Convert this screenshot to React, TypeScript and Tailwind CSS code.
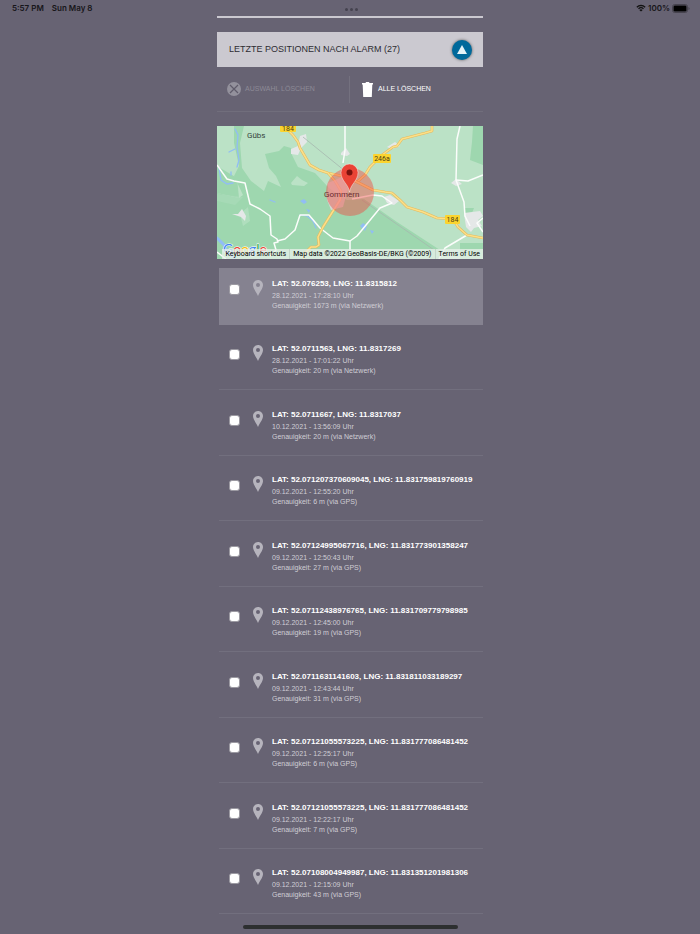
import React, { useState } from 'react';

interface Position {
  lat: string;
  lng: string;
  time: string;
  accuracy: string;
}

const POSITIONS: Position[] = [
  { lat: '52.076253', lng: '11.8315812', time: '28.12.2021 - 17:28:10 Uhr', accuracy: '1673 m (via Netzwerk)' },
  { lat: '52.0711563', lng: '11.8317269', time: '28.12.2021 - 17:01:22 Uhr', accuracy: '20 m (via Netzwerk)' },
  { lat: '52.0711667', lng: '11.8317037', time: '10.12.2021 - 13:56:09 Uhr', accuracy: '20 m (via Netzwerk)' },
  { lat: '52.071207370609045', lng: '11.831759819760919', time: '09.12.2021 - 12:55:20 Uhr', accuracy: '6 m (via GPS)' },
  { lat: '52.07124995067716', lng: '11.831773901358247', time: '09.12.2021 - 12:50:43 Uhr', accuracy: '27 m (via GPS)' },
  { lat: '52.07112438976765', lng: '11.831709779798985', time: '09.12.2021 - 12:45:00 Uhr', accuracy: '19 m (via GPS)' },
  { lat: '52.0711631141603', lng: '11.831811033189297', time: '09.12.2021 - 12:43:44 Uhr', accuracy: '31 m (via GPS)' },
  { lat: '52.07121055573225', lng: '11.831777086481452', time: '09.12.2021 - 12:25:17 Uhr', accuracy: '6 m (via GPS)' },
  { lat: '52.07121055573225', lng: '11.831777086481452', time: '09.12.2021 - 12:22:17 Uhr', accuracy: '7 m (via GPS)' },
  { lat: '52.07108004949987', lng: '11.831351201981306', time: '09.12.2021 - 12:15:09 Uhr', accuracy: '43 m (via GPS)' },
];

const MAIN_ROADS = [
  'M71 4L76 9L81 16L83 22L93 39L102 44L111 47L125 50L140 56',
  'M111 47L118 55L124 65L123 74L106 101L101 111L102 119L99 121L94 121L88 127L87 133',
  'M140 56L148 49L153 41L165 29L176 21L180 20L185 13L208 7L215 5V0',
  'M133 52L140 56L156 64L168 66L175 67L183 74L190 81L206 86L220 92L236 93L241 101L250 109L266 112',
];

const SIDE_ROADS = [
  'M0 39L10 53L17 55L28 57L33 78L43 83L53 90L54 109L60 113L61 116L57 117L59 124L53 130',
  'M60 115L68 113L78 104L83 89L92 89L103 102L116 112L133 115L140 110L163 82L175 77L165 70L156 69L135 73',
  'M128 0V24L126 37',
  'M243 0L240 13L239 54L247 76L248 90L253 100',
  'M239 54L251 55L266 49',
  'M250 109L228 122L222 133',
  'M133 133V115',
  'M266 92L260 97L266 106',
  'M0 126L9 133',
];

const PinIcon: React.FC = () => (
  <svg viewBox="0 0 10 16" className="h-4 w-[10px] shrink-0" aria-hidden="true">
    <path
      fillRule="evenodd"
      fill="#b6b4bd"
      d="M5 0C2.200 0 0 2.200 0 5c0 3.600 3.200 6.600 5 11 1.800-4.400 5-7.400 5-11 0-2.800-2.200-5-5-5zm0 3a2 2 0 1 1 0 4 2 2 0 0 1 0-4z"
    />
  </svg>
);

const StatusBar: React.FC = () => (
  <header className="grid h-4 grid-cols-3 items-center pr-[10px] pl-3 text-[8px] leading-4 font-semibold text-[#17161a]">
    <div className="flex gap-2 font-[Inter,sans-serif]">
      <span>5:57 PM</span>
      <span>Sun May 8</span>
    </div>
    <div className="flex justify-center gap-[2px] pt-[2px]">
      <span className="size-[3px] rounded-full bg-[#45424f]" />
      <span className="size-[3px] rounded-full bg-[#45424f]" />
      <span className="size-[3px] rounded-full bg-[#45424f]" />
    </div>
    <div className="flex items-center justify-end gap-[2px] font-[Inter,sans-serif]">
      <svg viewBox="0 0 18 14" className="h-[8px] w-[10px]" aria-hidden="true">
        <path d="M1.500 5.500a11 11 0 0 1 15 0M4.500 8.500a6.500 6.500 0 0 1 9 0" fill="none" stroke="#111" strokeWidth="2.400" />
        <path d="M9 13.500L6 10.500a4.300 4.300 0 0 1 6 0z" fill="#111" />
      </svg>
      <span>100%</span>
      <svg viewBox="0 0 18 9" className="h-[9px] w-[18px]" aria-hidden="true">
        <rect x="0.500" y="0.500" width="15" height="8" rx="2.200" fill="none" stroke="#47444f" />
        <rect x="1.500" y="1.500" width="13" height="6" rx="1.300" fill="#000" />
        <path d="M16.500 3v3q1-.5 1-1.500t-1-1.500z" fill="#47444f" />
      </svg>
    </div>
  </header>
);

const MapView: React.FC = () => (
  <section aria-label="Karte" className="relative mt-[14px] overflow-hidden">
    <svg viewBox="0 0 266 133" className="block w-full" fontFamily="Roboto, sans-serif">
      <rect width="266" height="133" fill="#bbe2c6" />

      {/* Forest */}
      <g fill="#9ed7af">
        <path d="M17 0H27L23 17L25 42L34 55L47 65L51 55L64 61L59 50L52 42L48 28L62 25L67 20L74 22L75 29L81 41L98 47L112 62L130 74L147 73L180 96L226 126L224 133H0V67L22 72L26 69L17 50L22 40L17 17z" />
        <path d="M0 67L22 72L20 52L0 40z" />
        <path d="M256 0H266V39L253 34L255 16zM243 117H266V133H243zM248 82h9l-2 5h-7z" />
      </g>
      <g fill="#bbe2c6">
        <path d="M74 57l6-7 5 4 6 3-4 3-12-1z" />
        <path d="M23 88l8-7 2 14-7 5z" opacity="0.600" />
        <path d="M0 68l26 3-8 8-18-4z" opacity="0.300" />
      </g>

      {/* Water */}
      <g fill="none" stroke="#91bdf5" strokeLinecap="round">
        <path d="M18 3l3 6-1 12 2 13-2 7M12 26l6-3M2 42l2 12 6 4 6-1M14 46v3" strokeWidth="1.300" />
        <path d="M0 112l7 7 4 8 6 5" strokeWidth="3" />
        <path d="M83 89l7 1 6 5 3 7" strokeWidth="1.200" />
        <path d="M53 74l5 2" strokeWidth="1.300" />
      </g>
      <path d="M83 75l4-2 3 3-3 2zM143 100l3-3 4 3-2 5zM153 104l4 1-2 3zM89 83l4 1-1 3z" fill="#91bdf5" />

      {/* Settlements */}
      <path
        d="M83 10l6-2 1 8-6 6-3 7-7-1v-5l7-3zM15 88l6 0 4-5 4 7-1 5-4-4-3-1zM124 27l5-5 4 6-3 2-6-1zM170 21l8-5 5 4-8 3zM234 57l5-4 6 5-6 2zM167 71l6-2 9 6-5 4-7-2zM247 87l16-2 3 5-5 4 4 6-8 2-3 4-5-5z"
        fill="#e5e8e8"
      />
      <path d="M86 11l42 34M145 74l75 52" stroke="#a6b8ae" strokeWidth="0.800" />

      {/* Roads */}
      {SIDE_ROADS.map((d) => (
        <path key={d} d={d} fill="none" stroke="#fbfdfb" strokeWidth="1.500" strokeLinejoin="round" />
      ))}
      {MAIN_ROADS.map((d) => (
        <g key={d} fill="none" strokeLinejoin="round">
          <path d={d} stroke="#e6b95c" strokeWidth="2.600" />
          <path d={d} stroke="#fbe089" strokeWidth="1.500" />
        </g>
      ))}

      {/* Accuracy radius, the built-up side of town shows through pinker */}
      <path d="M111 57l14-6 6 12-5 18-12 3-4-10z" fill="#f6dcea" opacity="0.600" />
      <circle cx="133" cy="66" r="24" fill="#f0443c" fillOpacity="0.430" />

      <g fontSize="7" textAnchor="middle">
        <rect x="63" y="-2" width="16" height="8" rx="1" fill="#fbd42f" />
        <text x="71" y="5" fill="#4b3e12">184</text>
        <rect x="156" y="28" width="18" height="9" rx="1" fill="#fbd42f" />
        <text x="165" y="35" fill="#4b3e12">246a</text>
        <rect x="228" y="89" width="15" height="9" rx="1" fill="#fbd42f" />
        <text x="235.500" y="96" fill="#4b3e12">184</text>
      </g>
      <text x="30" y="12" fontSize="8" fill="#35453c">Gübs</text>
      <text x="107" y="71" fontSize="8" fill="#6b2a30">Gommern</text>

      {/* Marker */}
      <path d="M132.500 66c-1-8-8.500-11-8.500-19.500a8.500 8.500 0 0 1 17 0c0 8.500-7.500 11.500-8.500 19.500z" fill="#ea4335" stroke="#fff" strokeOpacity="0.600" strokeWidth="0.700" />
      <circle cx="132.500" cy="46.500" r="3" fill="#7c130d" />

      <text x="6" y="128" fontSize="14" fontFamily="Lato, sans-serif" stroke="#fff" strokeWidth="1" paintOrder="stroke">
        <tspan fill="#4285f4">G</tspan>
        <tspan fill="#ea4335">o</tspan>
        <tspan fill="#fbbc05">o</tspan>
        <tspan fill="#4285f4">g</tspan>
        <tspan fill="#34a853">l</tspan>
        <tspan fill="#ea4335">e</tspan>
      </text>
    </svg>
    <div className="absolute right-0 bottom-0 flex h-[10px] font-[Roboto,sans-serif] text-[7px] leading-[10px] whitespace-nowrap text-black">
      <button type="button" className="bg-[#e9f1eb]/75 px-[3px]">Keyboard shortcuts</button>
      <span className="border-l border-[#c2d5c8] bg-[#e9f1eb]/75 px-[3px]">Map data ©2022 GeoBasis-DE/BKG (©2009)</span>
      <a href="#terms" className="border-l border-[#c2d5c8] bg-[#e9f1eb]/75 px-[3px]">Terms of Use</a>
    </div>
  </section>
);

interface RowProps {
  position: Position;
  index: number;
  active: boolean;
  checked: boolean;
  onToggle: () => void;
}

const PositionRow: React.FC<RowProps> = ({ position, index, active, checked, onToggle }) => (
  <li
    className={`mt-2 flex items-start border-b pt-[10px] pb-[13px] pl-[10px] odd:mt-[9px] ${
      active ? 'border-[#858290] bg-[#858290]' : 'border-[#726f7e]'
    }`}
  >
    <input
      id={`position-${index}`}
      type="checkbox"
      checked={checked}
      onChange={onToggle}
      className="mt-[6px] size-[11px] shrink-0 appearance-none rounded-[3px] border border-[#9c9aa2] bg-white checked:bg-[#00699b]"
    />
    <label htmlFor={`position-${index}`} className="flex min-w-0 grow items-start">
      <span className="mt-[2px] mr-[9px] ml-[13px]">
        <PinIcon />
      </span>
      <span className="block min-w-0 whitespace-nowrap">
        <strong className="block text-[8px] leading-[12px] font-bold text-white">
          LAT: {position.lat}, LNG: {position.lng}
        </strong>
        <span className="block text-[7px] leading-[11px] text-[#d0ced5]">{position.time}</span>
        <span className="block text-[7px] leading-[10px] text-[#d0ced5]">Genauigkeit: {position.accuracy}</span>
      </span>
    </label>
  </li>
);

const App: React.FC = () => {
  const [selected, setSelected] = useState<number[]>([]);

  const toggle = (idx: number) =>
    setSelected((prev) => (prev.includes(idx) ? prev.filter((i) => i !== idx) : [...prev, idx]));

  return (
    <div className="min-h-screen bg-[#676373] font-['Liberation_Sans',Arial,sans-serif]">
      <StatusBar />

      <main className="mx-auto w-[38%] min-w-[266px]">
        <div className="h-[2px] bg-[#cbc9d0]" />

        <div className="mt-[14px] flex h-[35px] items-center justify-between bg-[#cbc9d0] pr-[11px] pl-3">
          <h1 className="text-[9px] text-[#2e2d33]">LETZTE POSITIONEN NACH ALARM (27)</h1>
          <button
            type="button"
            aria-label="Liste einklappen"
            className="flex size-5 items-center justify-center rounded-full bg-[#00699b] shadow-[0_0_3px_#555]"
          >
            <svg viewBox="0 0 10 9" className="h-[9px] w-[10px]" aria-hidden="true">
              <path d="M5 0l5 9H0z" fill="#e4f3f8" />
            </svg>
          </button>
        </div>

        <div className="flex h-[45px] items-center border-b border-[#716e7c]">
          <button type="button" className="flex h-[27px] w-1/2 items-center gap-1 border-r border-[#74717f] pl-[10px] text-[7px] text-[#8d8a96]">
            <svg viewBox="0 0 14 14" className="size-[14px]" aria-hidden="true">
              <circle cx="7" cy="7" r="7" fill="#93919c" />
              <path d="M3 3l8 8M11 3l-8 8" stroke="#5f5b6a" strokeWidth="1.200" />
            </svg>
            AUSWAHL LÖSCHEN
          </button>
          <button type="button" className="flex h-[27px] items-center gap-[5px] pl-3 text-[7px] text-white">
            <svg viewBox="0 0 11 15" className="h-[15px] w-[11px]" aria-hidden="true">
              <path d="M0 1h3.500l.5-1h3l.5 1H11v1.500H0zM.7 2.500h9.600L9.800 15H1.200z" fill="#fff" />
            </svg>
            ALLE LÖSCHEN
          </button>
        </div>

        <MapView />

        <ul className="ml-[2px]">
          {POSITIONS.map((position, idx) => (
            <PositionRow
              key={idx}
              position={position}
              index={idx}
              active={idx === 0}
              checked={selected.includes(idx)}
              onToggle={() => toggle(idx)}
            />
          ))}
        </ul>
      </main>

      <div className="mx-auto mt-[11px] h-1 w-[215px] rounded-full bg-[#2d2f30]" />
    </div>
  );
};

export default App;
